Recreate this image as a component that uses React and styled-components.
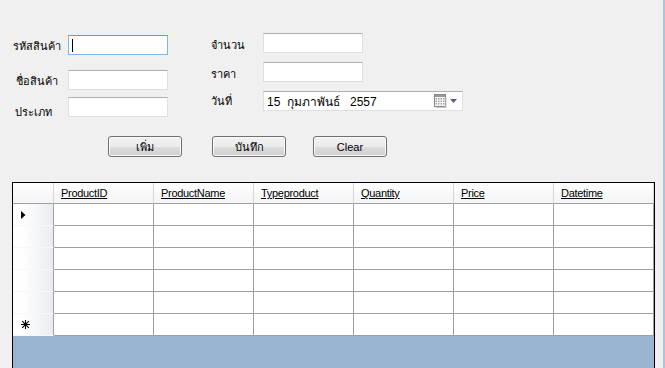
import React from "react";
import styled, { createGlobalStyle } from "styled-components";

const GlobalStyle = createGlobalStyle`
  html, body {
    margin: 0;
    padding: 0;
    background: #f0f0f0;
  }
  * { box-sizing: border-box; }
`;

const Window = styled.div`
  width: 665px;
  height: 368px;
  overflow: hidden;
  background: #f0f0f0;
  font-family: "Liberation Sans", "Noto Sans", Tahoma, sans-serif;
  font-size: 11px;
  color: #000;
  border-right: 2px solid #aec4dc;
  display: flex;
  flex-direction: column;
`;

const Fields = styled.div`
  display: flex;
  padding: 33px 0 0 13px;
`;

const FieldColumn = styled.div`
  display: flex;
  flex-direction: column;
  width: ${(p) => p.$width}px;
  margin-top: ${(p) => p.$top || 0}px;
`;

const FieldRow = styled.div`
  display: flex;
  align-items: center;
  margin-top: ${(p) => p.$gap || 0}px;
`;

const Label = styled.span`
  width: ${(p) => p.$width}px;
  padding-left: ${(p) => p.$indent || 0}px;
  position: relative;
  top: ${(p) => p.$shift || 0}px;
  font-size: 11px;
  white-space: nowrap;
`;

const TextBox = styled.div`
  width: ${(p) => p.$width || 100}px;
  height: 20px;
  background: #fff;
  border: 1px solid ${(p) => (p.$focused ? "#7eb4ea" : "#dbdfe6")};
  border-top-color: ${(p) => (p.$focused ? "#569de5" : "#abadb3")};
  display: flex;
  align-items: center;
  padding-left: 3px;
  font-size: 12px;
`;

const Caret = styled.span`
  width: 1px;
  height: 13px;
  background: #000;
`;

const DateText = styled.span`
  flex: 1;
  white-space: pre;
  font-size: 12px;
`;

const DropButton = styled.span`
  display: flex;
  align-items: center;
  gap: 2px;
  margin-right: 5px;
`;

const ButtonBar = styled.div`
  display: flex;
  padding-left: 108px;
  margin-top: 19px;
`;

const Button = styled.button`
  width: 74px;
  height: 21px;
  margin-left: ${(p) => p.$gap || 0}px;
  border: 1px solid #707070;
  border-radius: 3px;
  background: linear-gradient(#f2f2f2 0%, #ebebeb 50%, #dddddd 51%, #cfcfcf 100%);
  box-shadow: inset 0 0 0 1px #fbfbfb;
  font-family: "Liberation Sans", "Noto Sans", Tahoma, sans-serif;
  font-size: 11px;
  color: #000;
  padding: 0;
`;

const GridView = styled.div`
  margin: 25px 0 0 12px;
  width: 643px;
  flex: 1;
  border: 1px solid #000;
  border-bottom: none;
  background: #99b4d1;
  display: flex;
  flex-direction: column;
`;

const GridRows = styled.div`
  display: grid;
  grid-template-columns: 41px repeat(6, 100px);
  background: #fff;
  width: 641px;
`;

const HeaderCorner = styled.div`
  height: 21px;
  background: linear-gradient(#ffffff, #f3f4f6);
  border-right: 1px solid #d5d5d5;
  border-bottom: 1px solid #a0a0a0;
`;

const HeaderCell = styled.div`
  height: 21px;
  background: linear-gradient(#ffffff, #f3f4f6);
  border-right: 1px solid #d5d5d5;
  border-bottom: 1px solid #a0a0a0;
  padding: 4px 0 0 7px;
  text-decoration: underline;
  white-space: nowrap;
  letter-spacing: -0.3px;
`;

const RowHeader = styled.div`
  height: 22px;
  background: linear-gradient(90deg, #ffffff 20%, #e9ecf1 100%);
  border-right: 1px solid #a0a0a0;
  border-bottom: 1px solid #f6f7f9;
  display: flex;
  align-items: center;
  padding-left: 8px;
`;

const Cell = styled.div`
  height: 22px;
  border-right: 1px solid #a0a0a0;
  border-bottom: 1px solid #a0a0a0;
  background: #fff;
`;

const columns = ["ProductID", "ProductName", "Typeproduct", "Quantity", "Price", "Datetime"];

function CalendarIcon() {
  return (
    <svg width="14" height="14" viewBox="0 0 14 14">
      <rect x="0.5" y="0.5" width="11" height="12" fill="#f4f4f4" stroke="#8a8a8a" />
      <rect x="1" y="1" width="10" height="2" fill="#9a9a9a" />
      {[4, 6.5, 9].map((y) =>
        [2, 4.5, 7, 9.5].map((x) => (
          <rect key={`${x}-${y}`} x={x - 0.5} y={y} width="1.5" height="1.5" fill="#a8a8a8" />
        ))
      )}
      <path d="M12 3 V13.5 H2" stroke="#c8c8c8" fill="none" />
    </svg>
  );
}

function DownArrow() {
  return (
    <svg width="7" height="4" viewBox="0 0 7 4">
      <path d="M0 0 H7 L3.5 4 Z" fill="#4d6185" />
    </svg>
  );
}

function RowMarker({ kind }) {
  if (kind === "current") {
    return (
      <svg width="5" height="8" viewBox="0 0 5 8">
        <path d="M0 0 L4.5 4 L0 8 Z" fill="#000" />
      </svg>
    );
  }
  if (kind === "new") {
    return (
      <svg width="9" height="9" viewBox="0 0 9 9">
        <path d="M4.5 0 V9 M0 4.5 H9 M1.2 1.2 L7.8 7.8 M7.8 1.2 L1.2 7.8" stroke="#000" strokeWidth="1.1" />
      </svg>
    );
  }
  return null;
}

const rows = ["current", "", "", "", "", "new"];

export default function App() {
  return (
    <Window>
      <GlobalStyle />
      <Fields>
        <FieldColumn $width={198} $top={2}>
          <FieldRow>
            <Label $width={55} $shift={1}>รหัสสินค้า</Label>
            <TextBox $focused>
              <Caret />
            </TextBox>
          </FieldRow>
          <FieldRow $gap={15}>
            <Label $width={55} $indent={3} $shift={1}>ชื่อสินค้า</Label>
            <TextBox />
          </FieldRow>
          <FieldRow $gap={7}>
            <Label $width={55} $indent={2} $shift={5}>ประเภท</Label>
            <TextBox />
          </FieldRow>
        </FieldColumn>
        <FieldColumn $width={260}>
          <FieldRow>
            <Label $width={52} $shift={2}>จำนวน</Label>
            <TextBox />
          </FieldRow>
          <FieldRow $gap={9}>
            <Label $width={52} $shift={2}>ราคา</Label>
            <TextBox />
          </FieldRow>
          <FieldRow $gap={9}>
            <Label $width={52}>วันที่</Label>
            <TextBox $width={200}>
              <DateText>{"15  กุมภาพันธ์   2557"}</DateText>
              <DropButton>
                <CalendarIcon />
                <DownArrow />
              </DropButton>
            </TextBox>
          </FieldRow>
        </FieldColumn>
      </Fields>
      <ButtonBar>
        <Button>เพิ่ม</Button>
        <Button $gap={30}>บันทึก</Button>
        <Button $gap={27}>Clear</Button>
      </ButtonBar>
      <GridView>
        <GridRows>
          <HeaderCorner />
          {columns.map((c) => (
            <HeaderCell key={c}>{c}</HeaderCell>
          ))}
          {rows.map((kind, i) => (
            <React.Fragment key={i}>
              <RowHeader>
                <RowMarker kind={kind} />
              </RowHeader>
              {columns.map((c) => (
                <Cell key={c} />
              ))}
            </React.Fragment>
          ))}
        </GridRows>
      </GridView>
    </Window>
  );
}
